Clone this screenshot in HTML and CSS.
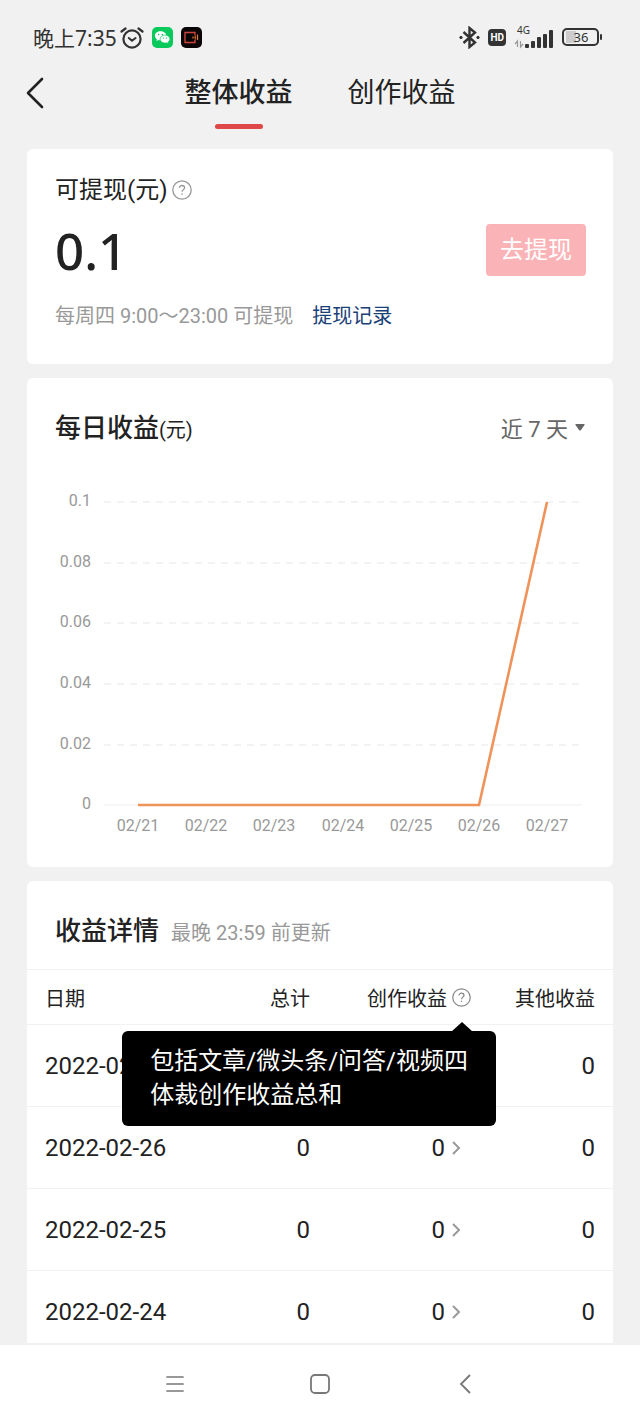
FILE: index.html
```html
<!DOCTYPE html>
<html lang="zh-CN">
<head>
<meta charset="utf-8">
<meta name="viewport" content="width=device-width, initial-scale=1">
<title>整体收益</title>
<link rel="stylesheet" href="styles.css">
</head>
<body>
<div class="status">
  <div class="status-side">
    <span class="clock">晚上7:35</span>
    <svg width="24" height="22" viewBox="0 0 24 22" fill="none" stroke="#333" stroke-width="2.2" stroke-linecap="round"><circle cx="12" cy="12" r="8.6"/><path d="M1.5 4.5 5.5 1.5M22.5 4.5 18.5 1.5"/><path d="m8.8 11 3.2 2.8 3.6-2.8" stroke-width="2"/></svg>
    <svg class="app" width="21" height="21" viewBox="0 0 21 21"><rect width="21" height="21" rx="5" fill="#08c95b"/><path d="M8.5 4.3c-3.2 0-5.6 1.9-5.6 4.4 0 1.4.8 2.7 2 3.5l-.5 1.9 2.1-1.1c.6.2 1.3.3 2 .3 3.2 0 5.7-2 5.7-4.6S11.7 4.3 8.5 4.3z" fill="#fff"/><path d="M13 8.1c-2.8 0-4.9 1.7-4.9 4s2.1 4 4.9 4c.6 0 1.200-.1 1.700-.3l1.900 1-.5-1.700c1.100-.7 1.800-1.800 1.800-3 0-2.300-2.200-4-4.900-4z" fill="#fff" stroke="#08c95b" stroke-width=".7"/><g fill="#08c95b"><circle cx="6.600" cy="7.500" r=".8"/><circle cx="10.300" cy="7.500" r=".8"/><circle cx="11.500" cy="11.100" r=".6"/><circle cx="14.600" cy="11.100" r=".6"/></g></svg>
    <svg class="app" width="21" height="21" viewBox="0 0 21 21"><rect width="21" height="21" rx="5" fill="#0b0507"/><path d="M14 8V5.500H4v10h10V13" fill="none" stroke="#c9443a" stroke-width="1.400"/><path d="M12 9.500v2M14.200 8.500v4M16.500 7.500v5.500" stroke="#e8763a" stroke-width="1.200"/></svg>
  </div>
  <div class="status-side status-right">
    <svg width="21" height="23" viewBox="0 0 21 23" fill="none" stroke="#333" stroke-width="2.400"><path d="m4.500 6 11.500 10.500-5.500 4.500V2L16 6.500 4.500 17"/><circle cx="2" cy="11.500" r="1.200" fill="#333" stroke-width="1"/><circle cx="19" cy="11.500" r="1.200" fill="#333" stroke-width="1"/></svg>
    <span class="hd">HD</span>
    <div class="signal">
      <span class="net">4G</span>
      <svg width="40" height="23" viewBox="0 0 40 23"><path d="M3.500 21v-6L1 18M6.500 15v6L9 18" fill="none" stroke="#999" stroke-width="1.200"/><g fill="#333"><rect x="11" y="18" width="4" height="4" rx="1"/><rect x="17" y="15" width="4" height="7" rx="1"/><rect x="23" y="11" width="4" height="11" rx="1"/><rect x="29" y="8" width="4" height="14" rx="1"/><rect x="35" y="4" width="4" height="18" rx="1"/></g></svg>
    </div>
    <svg width="41" height="19" viewBox="0 0 41 19"><rect x="4" y="3" width="10" height="12" fill="#ccc"/><rect x="1" y="1" width="35" height="16" rx="4" fill="none" stroke="#333" stroke-width="2"/><rect x="38" y="6" width="2" height="6" rx="1" fill="#333"/><text class="charge" x="19" y="14" text-anchor="middle">36</text></svg>
  </div>
</div>

<header class="header">
  <button class="back" aria-label="返回"><svg width="18" height="32" viewBox="0 0 18 32" fill="none" stroke="#222" stroke-width="2.600" stroke-linecap="round" stroke-linejoin="round"><path d="M16 2 2 16l14 14"/></svg></button>
  <nav class="tabs">
    <a class="tab active" href="#all">整体收益</a>
    <a class="tab" href="#creation">创作收益</a>
  </nav>
</header>

<main class="main">
  <section class="card balance">
    <div class="balance-title">可提现(元)
      <button class="help" aria-label="可提现说明"><svg width="20" height="20" viewBox="0 0 20 20" fill="none" stroke="#999" stroke-width="1.300"><circle cx="10" cy="10" r="9.200"/><path d="M7.400 8c0-1.600 1.100-2.500 2.600-2.500s2.600.9 2.600 2.300c0 1.700-2.500 2-2.500 4M10 13.300v1.500"/></svg></button>
    </div>
    <div class="balance-row">
      <strong class="amount">0.1</strong>
      <button class="withdraw">去提现</button>
    </div>
    <p class="note">每周四 9:00～23:00 可提现<a class="record" href="#record">提现记录</a></p>
  </section>

  <section class="card daily">
    <div class="daily-head">
      <h2 class="title">每日收益<span class="unit">(元)</span></h2>
      <button class="range">近 7 天<svg width="10" height="7" viewBox="0 0 10 7"><path d="M1 0h8q1 0 .5 1L6 6Q5 7 4 6L.5 1Q0 0 1 0z" fill="#666"/></svg></button>
    </div>
    <svg class="chart" viewBox="0 0 530 350" role="img" aria-label="近 7 天每日收益">
      <g stroke="#f0f0f0" stroke-width="1.500" stroke-dasharray="7 6">
        <path d="M49 12h478M49 73h478M49 133h478M49 194h478M49 255h478"/>
      </g>
      <path d="M49 315h478" stroke="#eee" stroke-width="1"/>
      <g class="axis" text-anchor="end">
        <text x="36" y="16">0.1</text><text x="36" y="77">0.08</text><text x="36" y="137">0.06</text><text x="36" y="198">0.04</text><text x="36" y="259">0.02</text><text x="36" y="319">0</text>
      </g>
      <g class="axis" text-anchor="middle">
        <text x="83" y="341">02/21</text><text x="151" y="341">02/22</text><text x="219" y="341">02/23</text><text x="288" y="341">02/24</text><text x="356" y="341">02/25</text><text x="424" y="341">02/26</text><text x="492" y="341">02/27</text>
      </g>
      <path d="M83 315h341L492 12" fill="none" stroke="#f0935a" stroke-width="2.600"/>
    </svg>
  </section>

  <section class="card detail">
    <div class="detail-head"><h2 class="title">收益详情</h2><span class="update">最晚 23:59 前更新</span></div>
    <table class="table">
      <colgroup><col><col class="c-total"><col class="c-create"><col class="c-other"></colgroup>
      <thead>
        <tr><th>日期</th><th>总计</th><th><div class="cell">创作收益<span class="slot"><button class="help" aria-label="创作收益说明" aria-describedby="tip"><svg width="19" height="19" viewBox="0 0 20 20" fill="none" stroke="#888" stroke-width="1.300"><circle cx="10" cy="10" r="9.200"/><path d="M7.400 8c0-1.600 1.100-2.500 2.600-2.500s2.600.9 2.600 2.300c0 1.700-2.500 2-2.500 4M10 13.300v1.500"/></svg></button></span><div class="tip" id="tip" role="tooltip">包括文章/微头条/问答/视频四<br>体裁创作收益总和</div></div></th><th>其他收益</th></tr>
      </thead>
      <tbody>
        <tr><td>2022-02-27</td><td></td><td></td><td>0</td></tr>
        <tr><td>2022-02-26</td><td>0</td><td><div class="cell">0<span class="slot"><svg class="more" width="9" height="14" viewBox="0 0 9 14"><path d="m1 1 6 6-6 6"/></svg></span></div></td><td>0</td></tr>
        <tr><td>2022-02-25</td><td>0</td><td><div class="cell">0<span class="slot"><svg class="more" width="9" height="14" viewBox="0 0 9 14"><path d="m1 1 6 6-6 6"/></svg></span></div></td><td>0</td></tr>
        <tr><td>2022-02-24</td><td>0</td><td><div class="cell">0<span class="slot"><svg class="more" width="9" height="14" viewBox="0 0 9 14"><path d="m1 1 6 6-6 6"/></svg></span></div></td><td>0</td></tr>
      </tbody>
    </table>
  </section>
</main>

<nav class="sysnav">
  <button aria-label="菜单"><svg width="20" height="18" viewBox="0 0 20 18" stroke="#777" stroke-width="1.700" stroke-linecap="round"><path d="M2 2h16M2 9h16M2 16h16"/></svg></button>
  <button aria-label="主页"><svg width="20" height="20" viewBox="0 0 20 20" fill="none" stroke="#777" stroke-width="1.800"><rect x="1" y="1" width="18" height="18" rx="4"/></svg></button>
  <button aria-label="返回上级"><svg width="12" height="20" viewBox="0 0 12 20" fill="none" stroke="#777" stroke-width="1.800"><path d="m11 1-9 9 9 9"/></svg></button>
</nav>
</body>
</html>
```
FILE: styles.css
```css
* { box-sizing: border-box; }

body {
  margin: 0;
  height: 100vh;
  display: flex;
  flex-direction: column;
  background: #f1f1f1;
  color: #222;
  font-family: Roboto, "Noto Sans CJK SC", sans-serif;
}

button {
  padding: 0;
  border: 0;
  background: none;
  font: inherit;
  color: inherit;
}

svg { display: block; flex: none; }
a { color: inherit; text-decoration: none; }

.status {
  flex: none;
  height: 65px;
  padding: 10px 37px 0 33px;
  display: flex;
  align-items: center;
  justify-content: space-between;
}
.status-side { display: flex; align-items: center; gap: 3px; }
.status-right { gap: 8px; }
.clock {
  font: 21px/24px "Noto Sans", "Noto Sans CJK SC", sans-serif;
  color: #333;
}
.app { margin-left: 5px; }
.hd {
  padding: 0 2px;
  border-radius: 4px;
  background: #333;
  color: #fff;
  font-size: 10px;
  font-weight: 700;
  line-height: 17px;
}
.signal { position: relative; }
.net {
  position: absolute;
  top: -3px;
  left: 3px;
  color: #333;
  font: 10px/14px "Noto Sans", sans-serif;
}
.charge { font: 13px "Noto Sans", sans-serif; fill: #333; }

.header {
  flex: none;
  height: 84px;
  display: grid;
  grid-template-columns: 1fr auto 1fr;
}
.back { justify-self: start; align-self: start; margin: 12px 0 0 26px; }
.tabs { display: flex; gap: 55px; }
.tab {
  position: relative;
  height: 64px;
  font-size: 27px;
  line-height: 56px;
}
.active { font-weight: 500; }
.active::after {
  content: "";
  position: absolute;
  left: 50%;
  bottom: 0;
  width: 48px;
  height: 5px;
  margin-left: -24px;
  border-radius: 3px;
  background: #de4848;
}

.main {
  flex: 1;
  min-height: 0;
  overflow: hidden;
  padding: 0 27px;
}
.card {
  margin-bottom: 14px;
  border-radius: 6px;
  background: #fff;
}
.balance { padding: 23px 27px 33px 28px; }
.balance-title {
  display: flex;
  align-items: center;
  gap: 4px;
  font-size: 24px;
  line-height: 36px;
}
.balance-row {
  display: flex;
  align-items: center;
  justify-content: space-between;
  margin-top: 16px;
}
.amount {
  font: 500 51px/52px "Noto Sans", sans-serif;
}
.withdraw {
  padding: 0 14px;
  border-radius: 4px;
  background: #fab3b6;
  color: #fff;
  font-size: 24px;
  line-height: 52px;
}
.note {
  margin: 25px 0 0;
  color: #999;
  font-size: 20px;
  line-height: 30px;
}
.record { margin-left: 19px; color: #1a4078; }

.daily { padding: 30px 28px 27px; }
.daily-head {
  display: flex;
  align-items: center;
  justify-content: space-between;
}
.title {
  margin: 0;
  font-size: 26px;
  font-weight: 500;
  line-height: 40px;
}
.unit { font-size: 20px; font-weight: 400; }
.range {
  display: flex;
  align-items: center;
  gap: 7px;
  padding-bottom: 4px;
  color: #666;
  font-size: 22px;
}
.chart { width: 100%; height: auto; margin-top: 40px; }
.axis { font-size: 16px; fill: #999; }

.detail-head {
  display: flex;
  align-items: center;
  gap: 12px;
  padding: 30px 28px 18px;
}
.update { color: #999; font-size: 20px; }

.table {
  width: 100%;
  border-collapse: collapse;
  table-layout: fixed;
  text-align: right;
}
.c-total { width: 100px; }
.c-create { width: 161px; }
.c-other { width: 142px; }
.table tr { border-top: 1px solid #f2f2f2; }
.table th { height: 55px; padding: 0; font-size: 20px; font-weight: 400; }
.table td { height: 82px; padding: 0; font-size: 24px; }
.table th:first-child, .table td:first-child { padding-left: 18px; text-align: left; }
.table th:last-child, .table td:last-child { padding-right: 18px; }
.cell {
  position: relative;
  display: flex;
  align-items: center;
  justify-content: flex-end;
}
.slot { width: 24px; display: flex; justify-content: flex-end; }
td .slot { width: 26px; padding-left: 7px; justify-content: flex-start; }
.more { fill: none; stroke: #999; stroke-width: 2; }

.tip {
  position: absolute;
  z-index: 1;
  top: 48px;
  right: -25px;
  padding: 13px 28px 14px;
  border-radius: 6px;
  background: #000;
  color: #fff;
  font-size: 24px;
  line-height: 34px;
  text-align: left;
  white-space: nowrap;
}
.tip::before {
  content: "";
  position: absolute;
  top: -9px;
  right: 23px;
  border: solid transparent;
  border-width: 0 11px 10px;
  border-bottom-color: #000;
}

.sysnav {
  flex: none;
  height: 79px;
  padding: 0 103px;
  display: grid;
  grid-template-columns: repeat(3, 1fr);
  align-items: center;
  justify-items: center;
  border-top: 2px solid #f1f1f1;
  background: #fff;
}
```
